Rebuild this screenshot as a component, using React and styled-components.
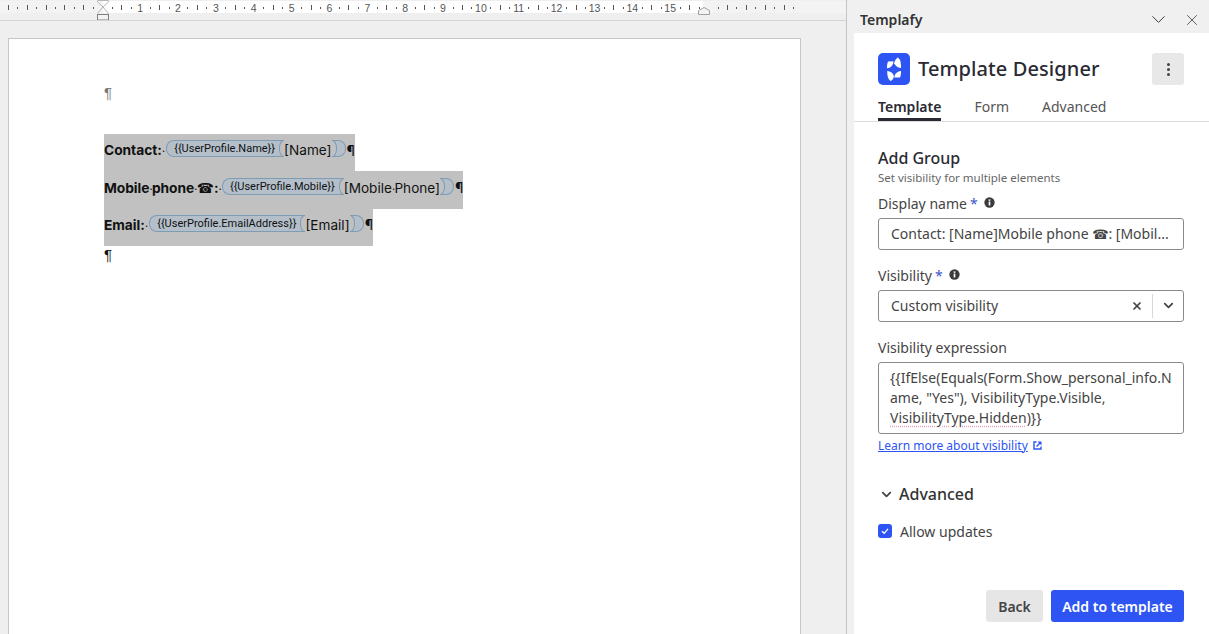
import React from "react";
import styled, { createGlobalStyle } from "styled-components";
import { ChevronDown, X } from "lucide-react";

const UNIT = 37.86;
const ORIGIN = 102.3;

const Ruler = () => {
  const marks = [];
  for (let q = -10; q <= 73; q++) {
    const x = ORIGIN + (q * UNIT) / 4;
    if (x < 4 || x > 795) continue;
    const whole = q % 4 === 0;
    const half = Math.abs(q % 2) === 0;
    const n = q / 4;
    if (q === 0 || q === 64) continue;
    if (whole && n > 0 && n < 16) {
      marks.push(
        <RulerNumber key={q} x={x} y={12} textAnchor="middle">
          {n}
        </RulerNumber>
      );
    } else if (half) {
      marks.push(<rect key={q} x={Math.round(x)} y={5} width={1} height={5} fill="#555" />);
    } else {
      marks.push(<rect key={q} x={Math.round(x)} y={7} width={1} height={2} fill="#555" />);
    }
  }
  return (
    <RulerBar>
      <svg width="846" height="20" viewBox="0 0 846 20">
        <rect x="0" y="1" width="846" height="12" fill="#f3f3f3" />
        <rect x="103" y="1" width="600" height="12" fill="#fff" />
        {marks}
        <path d="M98 0.5 L108 0.5 M97.5 0.5 V2 L103 7 L97.5 13.5 M108.5 0.5 V2 L103 7 L108.5 13.5" fill="none" stroke="#b5b5b5" />
        <rect x="97.5" y="14.5" width="11" height="5.5" fill="#f3f3f3" stroke="#808080" />
        <path d="M698.5 14.5 V10.5 L704 7.5 L709.5 10.5 V14.5 Z" fill="#f3f3f3" stroke="#a0a0a0" />
      </svg>
    </RulerBar>
  );
};

const InfoIcon = () => (
  <InfoSvg viewBox="0 0 12 12">
    <circle cx="6" cy="6" r="5.6" fill="#3b3b3b" />
    <rect x="5.1" y="5" width="1.8" height="4.2" fill="#fff" />
    <rect x="5.1" y="2.6" width="1.8" height="1.6" fill="#fff" />
  </InfoSvg>
);

const Logo = () => (
  <LogoBox>
    <svg width="32" height="32" viewBox="0 0 32 32">
      <rect width="32" height="32" rx="5" fill="#2e55f4" />
      <path d="M19.8 4.6C22.4 6.6 23.2 9.8 23 15.1C19.6 14.8 17.3 13 16.2 10.3C16.6 8 17.8 6 19.8 4.6Z" fill="#fff" />
      <path d="M15.4 8.2C15.3 11.6 13.6 14.6 9 15.2C8.8 12.8 9.2 10.8 10.1 8.6Z" fill="#fff" />
      <path d="M9.2 17.9C13.4 18.2 15.8 20.8 15.9 23.8C15.4 25.6 14.4 27 12.6 28C10.2 26.2 9 22.6 9.2 17.9Z" fill="#fff" />
      <path d="M23 17.9C23.1 20.4 22.8 22.4 22 24.4L16.4 24.4C16.6 21 18.6 18.4 23 17.9Z" fill="#fff" />
    </svg>
  </LogoBox>
);

const DocLine = ({ label, tag, value }) => (
  <Line>
    <Strong>{label}</Strong>
    <Tag>{tag}</Tag>
    <Value>{value}</Value>
    <TagEnd />
    <Pilcrow>¶</Pilcrow>
  </Line>
);

const App = () => {
  return (
    <Screen>
      <GlobalStyle />
      <Word>
        <Ruler />
        <Page>
          <Mark>¶</Mark>
          <Selection>
            <DocLine label={<>Contact:<Sp>·</Sp></>} tag="{{UserProfile.Name}}" value="[Name]" />
            <DocLine
              label={<>Mobile<Sp $narrow>·</Sp>phone<Sp $narrow>·</Sp><Phone>☎</Phone>:<Sp $narrow>·</Sp></>}
              tag="{{UserProfile.Mobile}}"
              value={<>[Mobile<Sp $narrow>·</Sp>Phone]</>}
            />
            <DocLine label={<>Email:<Sp>·</Sp></>} tag="{{UserProfile.EmailAddress}}" value="[Email]" />
          </Selection>
          <LastMark>¶</LastMark>
        </Page>
      </Word>
      <Pane>
        <PaneTitle>
          <span>Templafy</span>
          <PaneActions>
            <ChevronDown size={23} strokeWidth={1} />
            <X size={18} strokeWidth={1} />
          </PaneActions>
        </PaneTitle>
        <Panel>
          <Brand>
            <Logo />
            <BrandName>Template Designer</BrandName>
            <MoreButton>
              <Dot />
              <Dot />
              <Dot />
            </MoreButton>
          </Brand>
          <Tabs>
            <TabItem $active>Template</TabItem>
            <TabItem>Form</TabItem>
            <TabItem>Advanced</TabItem>
          </Tabs>
          <Body>
            <Heading>Add Group</Heading>
            <Sub>Set visibility for multiple elements</Sub>
            <Label>
              Display name <Req>*</Req>
              <InfoIcon />
            </Label>
            <Field>
              <FieldText>Contact: [Name]Mobile phone <FieldPhone>☎</FieldPhone>: [Mobil...</FieldText>
            </Field>
            <Label $gap={15}>
              Visibility <Req>*</Req>
              <InfoIcon />
            </Label>
            <Field>
              <FieldText>Custom visibility</FieldText>
              <ClearIcon size={12} strokeWidth={3.4} />
              <Divider />
              <ChevronDown size={15} strokeWidth={2.8} color="#444" />
            </Field>
            <Label $gap={15}>Visibility expression</Label>
            <Expression>
              {'{{IfElse(Equals(Form.Show_personal_info.N'}
              <br />
              {'ame, "Yes"), VisibilityType.Visible,'}
              <br />
              <Squiggle>VisibilityType.Hidden</Squiggle>
              {')}}'}
            </Expression>
            <LearnRow>
              <LearnLink>Learn more about visibility</LearnLink>
              <svg width="9" height="9" viewBox="0 0 9 9">
                <path d="M3.5 1H1v7h7V5.5" fill="none" stroke="#2e55f4" strokeWidth="1.4" />
                <path d="M4.5 0.5H8.5V4.5L7 3L4 6L3 5L6 2Z" fill="#2e55f4" />
              </svg>
            </LearnRow>
            <AdvancedRow>
              <ChevronDown size={15} strokeWidth={2.8} color="#444" />
              <span>Advanced</span>
            </AdvancedRow>
            <CheckRow>
              <CheckBox>
                <svg width="10" height="10" viewBox="0 0 10 10">
                  <path d="M2 5.2L4.2 7.3L8 2.9" fill="none" stroke="#fff" strokeWidth="1.3" />
                </svg>
              </CheckBox>
              Allow updates
            </CheckRow>
          </Body>
          <Footer>
            <BackButton>Back</BackButton>
            <PrimaryButton>Add to template</PrimaryButton>
          </Footer>
        </Panel>
      </Pane>
    </Screen>
  );
};

export default App;

const GlobalStyle = createGlobalStyle`
  html, body {
    margin: 0;
    padding: 0;
    overflow: hidden;
    background: #f0f0f0;
  }
`;
const Screen = styled.div`
  display: flex;
  width: 1209px;
  height: 634px;
  overflow: hidden;
  font-family: "Noto Sans", sans-serif;
`;
const Word = styled.div`
  width: 846px;
  flex-shrink: 0;
  display: flex;
  flex-direction: column;
  background-color: #efefef;
  border-right: 1px solid #c4c4c4;
  box-sizing: content-box;
`;
const RulerBar = styled.div`
  height: 20px;
  border-bottom: 1px solid #d4d4d4;
  svg {
    display: block;
  }
`;
const RulerNumber = styled.text`
  font-family: "Liberation Sans", sans-serif;
  font-size: 10.5px;
  fill: #555;
`;
const Page = styled.div`
  width: 696px;
  flex: 1;
  margin: 17px 0 0 8px;
  padding: 45px 0 0 95px;
  background-color: #fff;
  border: 1px solid #c6c6c6;
  border-bottom: none;
  font-family: Inter, sans-serif;
  color: #111;
`;
const Mark = styled.div`
  height: 50px;
  font-size: 15px;
  line-height: 18px;
  font-family: "Liberation Sans", sans-serif;
  color: #777;
`;
const Selection = styled.div`
  display: flex;
  flex-direction: column;
  align-items: flex-start;
`;
const Line = styled.div`
  display: flex;
  align-items: center;
  height: 37.4px;
  padding-bottom: 5px;
  box-sizing: border-box;
  background-color: #c1c1c1;
  white-space: nowrap;
`;
const Strong = styled.span`
  font-size: 13.8px;
  font-weight: 700;
  letter-spacing: -0.05px;
`;
const Sp = styled.span`
  display: inline-block;
  width: ${(p) => (p.$narrow ? 2.5 : 3.5)}px;
  text-align: center;
  font-weight: 400;
  font-size: 11px;
`;
const Phone = styled.span`
  font-family: "DejaVu Sans", sans-serif;
`;
const FieldPhone = styled(Phone)`
  font-size: 13px;
`;
const Tag = styled.span`
  position: relative;
  display: inline-flex;
  align-items: center;
  justify-content: center;
  height: 15px;
  margin: -3px 0 0 1px;
  padding: 0 9px 0 7px;
  border: 1px solid #7f9cb5;
  border-right: none;
  border-radius: 8px 0 0 8px / 8px 0 0 8px;
  background-color: #b4bfca;
  font-family: Roboto, sans-serif;
  font-size: 11px;
  letter-spacing: 0;
  &::after {
    content: "";
    position: absolute;
    top: -1px;
    right: 0;
    width: 4px;
    height: 15px;
    border: 1px solid #7f9cb5;
    border-width: 1px 0 1px 1px;
    border-radius: 5px 0 0 5px / 8px 0 0 8px;
    background-color: #c1c1c1;
  }
`;
const Value = styled.span`
  font-size: 13.6px;
  font-weight: 400;
`;
const TagEnd = styled.span`
  position: relative;
  display: inline-block;
  width: 13px;
  height: 15px;
  margin-top: -3px;
  border: 1px solid #7f9cb5;
  border-left: none;
  border-radius: 0 8px 8px 0 / 0 8px 8px 0;
  background-color: #b4bfca;
  &::before {
    content: "";
    position: absolute;
    top: -1px;
    left: 0;
    width: 4px;
    height: 15px;
    border: 1px solid #7f9cb5;
    border-width: 1px 1px 1px 0;
    border-radius: 0 5px 5px 0 / 0 8px 8px 0;
    background-color: #c1c1c1;
  }
`;
const Pilcrow = styled.span`
  font-size: 14px;
  margin-left: 1px;
`;
const LastMark = styled.div`
  font-size: 15px;
  line-height: 18px;
  font-family: "Liberation Sans", sans-serif;
`;
const Pane = styled.div`
  flex: 1;
  min-width: 0;
  display: flex;
  flex-direction: column;
  background-color: #f0f0f0;
`;
const PaneTitle = styled.div`
  height: 33px;
  flex-shrink: 0;
  display: flex;
  align-items: center;
  justify-content: space-between;
  padding: 8px 8px 2px 13px;
  box-sizing: border-box;
  font-size: 14px;
  font-weight: 600;
  color: #333;
`;
const PaneActions = styled.div`
  display: flex;
  align-items: center;
  gap: 13px;
  color: #333;
`;
const Panel = styled.div`
  flex: 1;
  display: flex;
  flex-direction: column;
  margin-left: 7px;
  background-color: #fff;
  min-height: 0;
`;
const Brand = styled.div`
  display: flex;
  align-items: center;
  gap: 8px;
  padding: 20px 25px 0 24px;
`;
const LogoBox = styled.div`
  width: 32px;
  height: 32px;
  svg {
    display: block;
  }
`;
const BrandName = styled.div`
  flex: 1;
  margin-top: -2px;
  font-size: 20px;
  font-weight: 500;
  letter-spacing: 0.1px;
  color: #2a2a33;
`;
const MoreButton = styled.div`
  width: 32px;
  height: 32px;
  display: flex;
  flex-direction: column;
  align-items: center;
  justify-content: center;
  gap: 2px;
  border-radius: 3px;
  background-color: #e8e8e8;
`;
const Dot = styled.span`
  width: 3px;
  height: 3px;
  border-radius: 50%;
  background-color: #444;
`;
const Tabs = styled.div`
  display: flex;
  gap: 33px;
  height: 36px;
  padding: 0 24px;
  border-bottom: 1px solid #dcdcdc;
`;
const TabItem = styled.div`
  display: flex;
  align-items: center;
  margin-bottom: -1px;
  padding-top: 9px;
  height: 24px;
  font-size: 14px;
  color: ${(p) => (p.$active ? "#2a2a33" : "#555")};
  font-weight: ${(p) => (p.$active ? 600 : 400)};
  border-bottom: ${(p) => (p.$active ? "3px solid #2a2a33" : "none")};
`;
const Body = styled.div`
  flex: 1;
  display: flex;
  flex-direction: column;
  padding: 25px 25px 0 24px;
`;
const Heading = styled.div`
  font-size: 16px;
  line-height: 22px;
  font-weight: 500;
  color: #2a2a33;
`;
const Sub = styled.div`
  font-size: 11.5px;
  line-height: 17px;
  color: #666;
`;
const Label = styled.div`
  display: flex;
  align-items: center;
  height: 20px;
  margin-top: ${(p) => p.$gap ?? 7}px;
  margin-bottom: 5px;
  font-size: 14px;
  color: #444;
`;
const Req = styled.span`
  margin-left: 3px;
  color: #3a55c8;
`;
const InfoSvg = styled.svg`
  width: 11px;
  height: 11px;
  margin: -2px 0 0 6px;
`;
const Field = styled.div`
  display: flex;
  align-items: center;
  height: 32px;
  box-sizing: border-box;
  padding: 0 7px 1px 12px;
  border: 1px solid #8a8a8a;
  border-radius: 3px;
  font-size: 14px;
  color: #444;
`;
const FieldText = styled.div`
  flex: 1;
  white-space: nowrap;
  overflow: hidden;
`;
const ClearIcon = styled(X)`
  color: #444;
`;
const Divider = styled.span`
  width: 1px;
  height: 24px;
  margin: 0 8px 0 9px;
  background-color: #d8d8d8;
`;
const Expression = styled.div`
  height: 72px;
  box-sizing: border-box;
  padding: 5px 11px;
  border: 1px solid #8a8a8a;
  border-radius: 3px;
  font-size: 14px;
  line-height: 20px;
  white-space: nowrap;
  overflow: hidden;
  color: #444;
`;
const Squiggle = styled.span`
  text-decoration: underline dotted #e3a9bd;
  text-underline-offset: 3px;
`;
const LearnRow = styled.div`
  display: flex;
  align-items: center;
  gap: 5px;
  margin-top: 3px;
  height: 16px;
`;
const LearnLink = styled.a`
  font-size: 12px;
  color: #2e55f4;
  text-decoration: underline;
`;
const AdvancedRow = styled.div`
  display: flex;
  align-items: center;
  gap: 5px;
  margin-top: 30px;
  margin-left: 1px;
  height: 22px;
  font-size: 16px;
  font-weight: 500;
  color: #333;
`;
const CheckRow = styled.div`
  display: flex;
  align-items: center;
  gap: 8px;
  margin-top: 16px;
  height: 20px;
  font-size: 14px;
  color: #444;
`;
const CheckBox = styled.span`
  width: 14px;
  height: 14px;
  display: flex;
  align-items: center;
  justify-content: center;
  border-radius: 3px;
  background-color: #2e55f4;
`;
const Footer = styled.div`
  display: flex;
  justify-content: flex-end;
  gap: 8px;
  padding: 0 25px 12px 0;
`;
const BackButton = styled.div`
  width: 57px;
  height: 32px;
  display: flex;
  align-items: center;
  justify-content: center;
  border-radius: 3px;
  background-color: #e6e6e6;
  font-size: 14px;
  font-weight: 600;
  color: #444;
`;
const PrimaryButton = styled(BackButton)`
  width: 133px;
  background-color: #2e55f4;
  color: #fff;
`;
